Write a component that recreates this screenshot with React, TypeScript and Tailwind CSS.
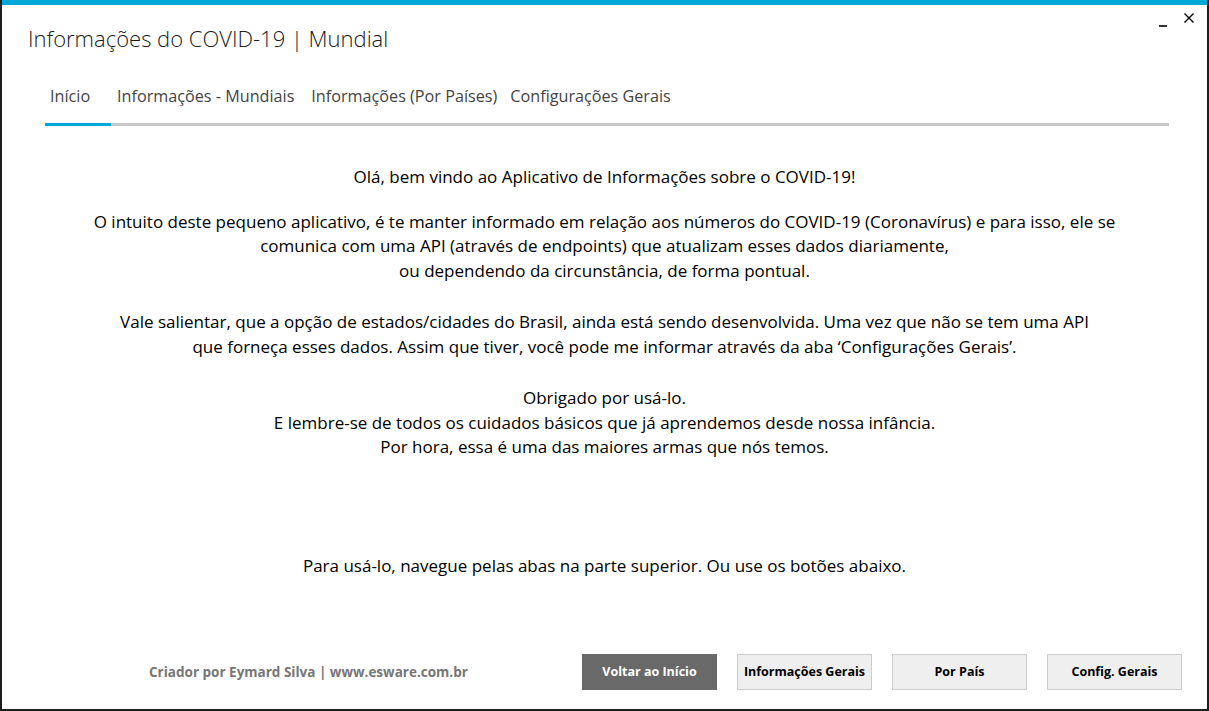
export default function App() {
  const tabs = [
    { label: "Início", cls: "pl-[5px] w-[66px] -mb-[3px] border-b-[3px] border-[#00a8d8]" },
    { label: "Informações - Mundiais", cls: "pl-[6px] pr-[17px]" },
    { label: "Informações (Por Países)", cls: "pr-[13px]" },
    { label: "Configurações Gerais", cls: "" },
  ];

  return (
    <div
      className="h-[711px] w-full bg-white flex flex-col border-l-2 border-r-2 border-b-2 border-[#1e1e1e] overflow-hidden"
      style={{ fontFamily: '"Open Sans", "Noto Sans", sans-serif' }}
    >
      <div className="h-[5px] bg-[#00a8d8] shrink-0" />

      {/* header */}
      <div className="flex items-start justify-between pl-[26px] pr-[12px]">
        <h1 className="mt-[18px] text-[22px] font-light text-[#1a1a1a] leading-[30px]">
          Informações do COVID-19 | Mundial
        </h1>
        <div className="flex items-center gap-[14px] mt-[4px] text-black">
          <svg width="12" height="12" viewBox="0 0 12 12" className="mt-[6px]">
            <path d="M2 11h8" stroke="black" strokeWidth="1.6" />
          </svg>
          <svg width="12" height="12" viewBox="0 0 12 12">
            <path d="M1.5 1.5l9 9M10.5 1.5l-9 9" stroke="black" strokeWidth="1.4" />
          </svg>
        </div>
      </div>

      {/* tabs */}
      <div className="ml-[43px] mr-[38px] mt-[31px] flex border-b-[3px] border-[#c8c8c8]">
        {tabs.map((t) => (
          <div key={t.label} className={"pb-[15px] text-[16.2px] text-[#444444] " + t.cls}>
            {t.label}
          </div>
        ))}
      </div>

      {/* body */}
      <div className="flex-1 flex flex-col items-center text-center text-[17px] leading-[24.5px] text-black pt-[39px]">
        <p>Olá, bem vindo ao Aplicativo de Informações sobre o COVID-19!</p>
        <p className="mt-[20px]">
          O intuito deste pequeno aplicativo, é te manter informado em relação aos números do COVID-19 (Coronavírus) e para isso, ele se
          <br />
          comunica com uma API (através de endpoints) que atualizam esses dados diariamente,
          <br />
          ou dependendo da circunstância, de forma pontual.
        </p>
        <p className="mt-[27px]">
          Vale salientar, que a opção de estados/cidades do Brasil, ainda está sendo desenvolvida. Uma vez que não se tem uma API
          <br />
          que forneça esses dados. Assim que tiver, você pode me informar através da aba ‘Configurações Gerais’.
        </p>
        <p className="mt-[27px]">
          Obrigado por usá-lo.
          <br />
          E lembre-se de todos os cuidados básicos que já aprendemos desde nossa infância.
          <br />
          Por hora, essa é uma das maiores armas que nós temos.
        </p>
        <p className="mt-[94px]">Para usá-lo, navegue pelas abas na parte superior. Ou use os botões abaixo.</p>
      </div>

      {/* footer */}
      <div className="flex items-center pl-[147px] pr-[25px] pb-[19px]">
        <span className="text-[13.5px] font-bold text-[#767676] flex-1">
          Criador por Eymard Silva | www.esware.com.br
        </span>
        <div className="flex gap-[20px]">
          <button className="w-[135px] h-[36px] bg-[#696969] text-white text-[12.5px] font-bold">
            Voltar ao Início
          </button>
          <button className="w-[135px] h-[36px] bg-[#efefef] border border-[#cccccc] text-black text-[12.5px] font-bold">
            Informações Gerais
          </button>
          <button className="w-[135px] h-[36px] bg-[#efefef] border border-[#cccccc] text-black text-[12.5px] font-bold">
            Por País
          </button>
          <button className="w-[135px] h-[36px] bg-[#efefef] border border-[#cccccc] text-black text-[12.5px] font-bold">
            Config. Gerais
          </button>
        </div>
      </div>
    </div>
  );
}
